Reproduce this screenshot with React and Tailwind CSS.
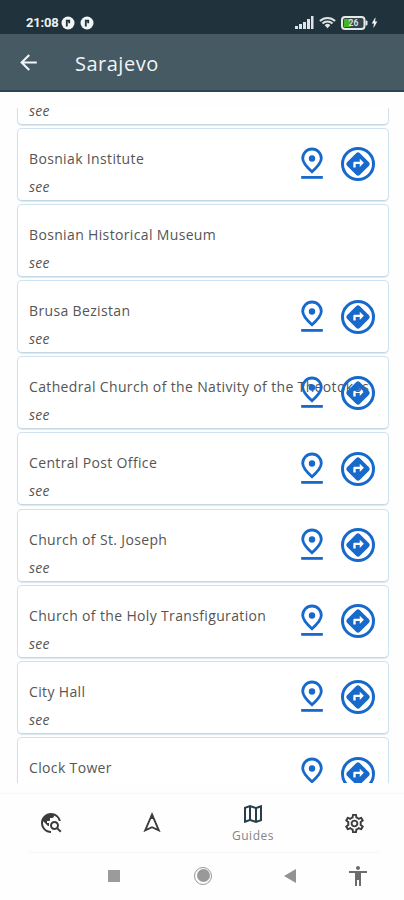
import React from "react";
import {
  MdAccessibility,
  MdArrowBack,
  MdBolt,
  MdDirections,
  MdOutlineMap,
  MdOutlineSettings,
  MdTravelExplore,
} from "react-icons/md";

const places = [
  { name: "Bosnian National Theatre", type: "see", located: false },
  { name: "Bosniak Institute", type: "see", located: true },
  { name: "Bosnian Historical Museum", type: "see", located: false },
  { name: "Brusa Bezistan", type: "see", located: true },
  {
    name: "Cathedral Church of the Nativity of the Theotokos",
    type: "see",
    located: true,
  },
  { name: "Central Post Office", type: "see", located: true },
  { name: "Church of St. Joseph", type: "see", located: true },
  { name: "Church of the Holy Transfiguration", type: "see", located: true },
  { name: "City Hall", type: "see", located: true },
  { name: "Clock Tower", type: "see", located: true },
];

const NoticeIcon = () => (
  <svg viewBox="0 0 14 14" className="size-[14px]">
    <circle cx="7" cy="7" r="6.5" fill="#f1f5f6" />
    <path
      d="M5.8 10.5V4.6h2.4v2.6"
      fill="none"
      stroke="#20323c"
      strokeWidth="1.8"
    />
  </svg>
);

const SignalIcon = () => (
  <svg viewBox="0 0 19 13" className="h-[13px] w-[19px]" fill="#dde3e6">
    <rect x="0" y="10" width="3" height="3" />
    <rect x="4" y="8" width="3" height="5" />
    <rect x="8" y="6" width="3" height="7" />
    <rect x="12" y="3" width="3" height="10" />
    <rect x="16" y="0" width="2.5" height="13" />
  </svg>
);

const WifiIcon = () => (
  <svg viewBox="0 0 18 13" className="h-[13px] w-[17px]" fill="none" stroke="#dde3e6">
    <path d="M1 5a11.5 11.5 0 0 1 16 0" strokeWidth="2.2" />
    <path d="M3.7 7.6a7.5 7.5 0 0 1 10.6 0" strokeWidth="2" />
    <path d="M6 9.4a4.3 4.3 0 0 1 6 0L9 12.6z" fill="#dde3e6" stroke="none" />
  </svg>
);

const BatteryIcon = () => (
  <svg viewBox="0 0 27 14" className="h-[14px] w-[27px]">
    <rect x="1" y="1" width="22.5" height="12" rx="3" fill="#34444a" stroke="#e4e9ea" strokeWidth="2" />
    <rect x="3" y="3" width="6.5" height="8" fill="#45b51f" />
    <rect x="24.5" y="4.5" width="2" height="5" rx="1" fill="#e4e9ea" />
    <text x="7.5" y="10.2" fontSize="8.5" fontWeight="700" fill="#dbe2e0" fontFamily="Roboto, sans-serif">
      26
    </text>
  </svg>
);

const PinIcon = () => (
  <svg viewBox="0 0 24 34" className="h-[34px] w-[24px]">
    <path
      d="M12 24.8C6.2 19.6 2.7 15.8 2.7 11.3A9.3 9.3 0 0 1 21.3 11.3C21.3 15.8 17.8 19.6 12 24.8Z"
      fill="none"
      stroke="#1769cb"
      strokeWidth="2.8"
    />
    <circle cx="12" cy="11.5" r="3.2" fill="#1769cb" />
    <rect x="1.2" y="29" width="21.6" height="2.8" fill="#1769cb" />
  </svg>
);

const RouteButton = () => (
  <span className="flex size-[34px] items-center justify-center rounded-full border-3 border-[#1769cb]">
    <MdDirections className="size-[28px] shrink-0 text-[#1769cb]" />
  </span>
);

const CompassIcon = () => (
  <svg viewBox="0 0 18 22" className="h-[22px] w-[18px]">
    <path
      d="M9 2.5 2.2 18.4 9 15.2l6.8 3.2z"
      fill="none"
      stroke="#3c3c3c"
      strokeWidth="1.9"
    />
    <path d="M9 3v4" stroke="#3c3c3c" strokeWidth="2.4" />
  </svg>
);

const PlaceCard = ({ place }) => (
  <div className="flex h-[73px] shrink-0 justify-between rounded-[5px] border-[1.5px] border-[#cfe2ef] border-b-[#c3d7e2] bg-white pr-[13px] pl-[11px] shadow-[0_1px_1px_#dbe8f0]">
    <div className="w-0 whitespace-nowrap text-[#555]">
      <p className="mt-[20px] text-[14px] leading-5 tracking-[0.35px]">{place.name}</p>
      <p className="mt-[8px] text-[14px] leading-5 tracking-[0.2px] italic">{place.type}</p>
    </div>
    {place.located && (
      <div className="isolate mt-[18px] flex h-[35px] items-center gap-[17px]">
        <PinIcon />
        <RouteButton />
      </div>
    )}
  </div>
);

const App = () => {
  return (
    <div className="flex h-[900px] w-[404px] flex-col overflow-hidden bg-[#fefefe] font-['Open_Sans',sans-serif]">
      <div className="flex h-[34px] shrink-0 items-center justify-between bg-[#20323c] pt-[11px] pr-[25px] pl-[26px]">
        <div className="flex items-center">
          <span className="w-[35px] font-[Roboto,sans-serif] text-[13px] font-bold tracking-[-0.2px] text-[#edf1f3]">
            21:08
          </span>
          <div className="flex gap-[5px]">
            <NoticeIcon />
            <NoticeIcon />
          </div>
        </div>
        <div className="flex items-center">
          <SignalIcon />
          <span className="mr-[5px] ml-[5px]">
            <WifiIcon />
          </span>
          <BatteryIcon />
          <MdBolt className="-mr-[2px] size-[13px] text-[#f1f5f6]" />
        </div>
      </div>

      <header className="flex h-[58px] shrink-0 items-center border-b-2 border-[#294650] bg-[#465a64] pt-[3px] pl-[16px] text-[#eff5f8]">
        <MdArrowBack className="mb-[2px] size-[25px]" />
        <h1 className="ml-[34px] pt-[1px] text-[20px] leading-8 tracking-[0.5px]">Sarajevo</h1>
      </header>

      <main className="mt-[16px] flex h-[675px] shrink-0 flex-col justify-end overflow-hidden pr-[15px] pl-[17px]">
        <div className="-mb-[27px] flex flex-col gap-[3.15px]">
          {places.map((place) => (
            <PlaceCard key={place.name} place={place} />
          ))}
        </div>
      </main>

      <nav className="mt-[10px] grid h-[59px] shrink-0 grid-cols-4 place-items-center border-t border-[#f7f7f7] text-[#3c3c3c]">
        <MdTravelExplore className="size-[24px]" />
        <CompassIcon />
        <div className="flex flex-col items-center pt-[2px] pl-[1px] text-[#263f4b]">
          <MdOutlineMap className="size-[24px]" />
          <span className="text-[12px] leading-5 tracking-[0.5px] text-[#858585]">Guides</span>
        </div>
        <MdOutlineSettings className="ml-[1px] size-[23px]" />
      </nav>

      <div className="ml-[28px] flex h-[46px] w-[352px] items-center border-t border-[#f7f7f7]">
        <span className="ml-[80px] size-[12px] bg-[#9b9b9b]" />
        <span className="ml-[74px] flex size-[18px] items-center justify-center rounded-full border border-[#999]">
          <span className="size-[13px] rounded-full bg-[#999]" />
        </span>
        <svg viewBox="0 0 12 14" className="ml-[72px] h-[14px] w-[12px]">
          <path d="M0 7 12 0v14z" fill="#929292" />
        </svg>
        <MdAccessibility className="ml-[50px] size-[24px] text-[#6c6c6c]" />
      </div>
    </div>
  );
};

export default App;
